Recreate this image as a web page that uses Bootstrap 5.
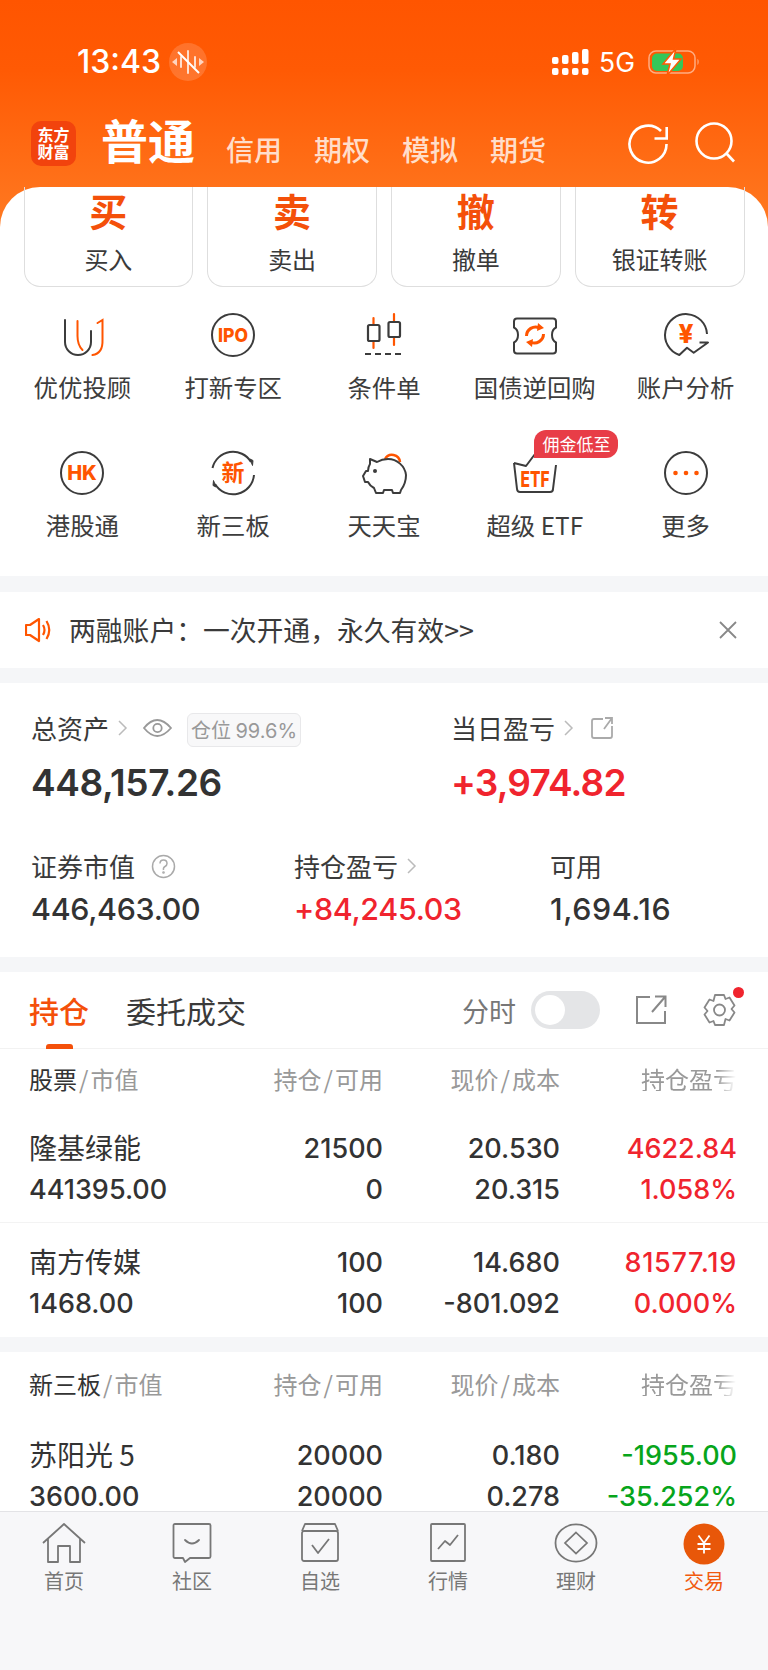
<!doctype html>
<html lang="zh-CN">
<head>
  <meta charset="utf-8">
  <meta name="viewport" content="width=device-width, initial-scale=1">
  <title>交易</title>
  <link href="https://cdn.jsdelivr.net/npm/bootstrap@5.3.5/dist/css/bootstrap.min.css" rel="stylesheet">
  <style>
    html, body { height: 100%; }
    body {
      width: 768px;
      height: 1670px;
      overflow: hidden;
      font-family: Inter, "Noto Sans CJK SC", sans-serif;
      color: #333;
      background: #fff;
    }
    svg { display: block; }
    .cjk-text { font-family: "Noto Sans CJK SC", sans-serif; }
    .wide-ones { letter-spacing: .7px; }

    /* orange header */
    .top-band {
      height: 230px;
      background: linear-gradient(#ff5500 0, #ff5a04 70px, #ff7a22 230px);
    }
    .status-bar { height: 124px; padding: 0 68px 0 77px; color: #fff; }
    .clock-text { font-size: 32px; font-weight: 500; line-height: 1; }
    .mute-blob { width: 38px; height: 38px; border-radius: 50%; background: rgba(255,255,255,.16); margin-left: 8px; }
    .net-text { font-size: 26.5px; line-height: 1; margin: 0 13px 0 10px; }
    .nav-strip { height: 39px; padding: 0 30px 0 31px; color: #fff; }
    .brand-logo {
      width: 45px; height: 45px; border-radius: 10px; background: #f2430d;
      font-size: 16px; line-height: 17px; font-weight: 700; text-align: center;
      margin-right: 25px; padding-top: 5px; flex: none;
    }
    .acct-main { font-size: 47px; font-weight: 700; line-height: 1; margin-right: 31px; margin-top: -10px; }
    .acct-other { width: 88px; font-size: 28px; font-weight: 500; line-height: 1; color: rgba(255,255,255,.78); margin-top: 11px; }
    .search-gap { margin-left: 23px; margin-right: -1px; }

    /* white sheet */
    .main-sheet { margin-top: -43px; height: 1324px; background: #fff; border-radius: 40px 40px 0 0; }
    .trade-row { padding: 0 23.5px; gap: 14px; }
    .trade-btn {
      flex: 1 1 0; height: 100px; padding: 0 0 2px; color: #333;
      border: 1px solid #dedede; border-top: 0; border-radius: 0 0 16px 16px;
    }
    .trade-glyph { font-size: 38px; line-height: 46px; font-weight: 700; color: #f4500a; }
    .trade-name { font-size: 24px; line-height: 52px; color: #3a3a3a; }

    .menu-grid { display: grid; grid-template-columns: repeat(5, 150.8px); row-gap: 45px; padding: 24px 0 34px 7px; }
    .menu-label { font-size: 24.4px; line-height: 34px; margin-top: 11px; color: #3d3d3d; white-space: nowrap; }
    .commission-tag {
      top: -19px; left: 75px; width: 84px; height: 28px; background: #e83d47; color: #fff;
      font-size: 17px; line-height: 28px; border-radius: 12px 12px 12px 0; text-align: center;
    }

    .sep-band { height: 15px; background: #f5f6f8; }
    .sep-wide { height: 16px; }

    .notice-bar { height: 76px; padding: 0 31px 0 25px; }
    .notice-text { font-size: 26.8px; margin-left: 17px; color: #3a3a3a; line-height: 1; }

    /* assets */
    .asset-panel { height: 274px; padding: 27px 0 0 31px; }
    .asset-label { height: 36px; font-size: 26px; line-height: 36px; color: #3a3a3a; }
    .asset-big { font-size: 37px; line-height: 50px; font-weight: 600; margin-top: 12px; letter-spacing: -.4px; }
    .asset-big.tone-up { letter-spacing: -.8px; }
    .asset-mid { font-size: 30.4px; line-height: 42px; font-weight: 500; margin-top: 4px; letter-spacing: -.3px; }
    .asset-mid.wide-ones { letter-spacing: .6px; }
    .span-wide { width: 420px; }
    .span-first { width: 263px; }
    .span-second { width: 256px; }
    .asset-second { margin-top: 40px; }
    .eye-gap { margin-left: 14px; }
    .pos-tag {
      height: 34px; width: 114px; margin: 4px 0 0 15px; border: 1px solid #e8e8ea; border-radius: 6px;
      background: #f8f8f9; color: #999; font-size: 20px; line-height: 32px; text-align: center;
    }
    .tag-num { font-family: Inter, sans-serif; }
    .tone-up { color: #f0242e; }
    .tone-down { color: #07a51b; }

    /* positions */
    .tab-strip { height: 77px; padding: 0 29px 0 29px; border-bottom: 1px solid #f2f2f2; }
    .tab-on { font-size: 30px; color: #f4500a; line-height: 1; font-weight: 500; }
    .tab-off { font-size: 30px; margin-left: 37px; line-height: 1; color: #3a3a3a; }
    .tab-mark { left: 46px; bottom: -1px; width: 27px; height: 5px; background: #f4500a; border-radius: 3px 3px 0 0; }
    .split-text { font-size: 27px; color: #777; line-height: 1; margin-right: 15px; }
    .mini-switch { width: 69px; height: 38px; border-radius: 19px; background: #e4e5e7; padding: 4px; margin-right: 35px; }
    .mini-knob { width: 30px; height: 30px; border-radius: 50%; background: #fff; }
    .gear-wrap { margin-left: 35px; margin-right: 2px; }
    .red-dot { right: -7px; top: -6px; width: 11px; height: 11px; border-radius: 50%; background: #f0242e; }

    .pos-grid { display: grid; grid-template-columns: 1fr 177px 177px 177px; padding: 0 31px 0 29px; }
    .pos-head { height: 60px; align-items: center; font-size: 24px; color: #999; line-height: 1; }
    .pos-head-tall { height: 64px; }
    .pos-head b { font-weight: 400; color: #333; }
    .head-slash { margin: 0 2px; }
    .fade-end { -webkit-mask-image: linear-gradient(to right, #000 78%, transparent 99%); mask-image: linear-gradient(to right, #000 78%, transparent 99%); }
    .pos-item { height: 114px; padding-top: 19px; font-size: 27px; line-height: 41px; font-weight: 500; }
    .pos-item .pos-name { font-size: 28px; font-weight: 400; line-height: 39px; }
    .pos-line { border-bottom: 1px solid #f3f3f3; }

    /* bottom tabs */
    .foot-bar { height: 159px; background: #f7f7f9; border-top: 1px solid #e3e3e6; }
    .foot-item { width: 128px; padding-top: 11px; color: #777; }
    .foot-label { font-size: 20px; line-height: 26px; margin-top: 5px; }
    .foot-tight { margin-top: 3px; }
    .foot-active { color: #f15a0f; }
  </style>
</head>

<body>
  <div class="top-band">
    <div class="status-bar d-flex align-items-center">
      <span class="clock-text">13:43</span>
      <span class="mute-blob d-flex align-items-center justify-content-center">
        <svg width="38" height="38" viewBox="0 0 38 38" fill="#fff">
          <path d="M3 19l5-4v8zM35 19l-5-4v8z" opacity=".7"/>
          <path d="M12 14v10M19 8v22M26 14v10" stroke="#fff" stroke-opacity=".85" stroke-width="1.800" stroke-linecap="round"/>
          <path d="M9 9l21 21" stroke="#fff" stroke-width="2"/>
        </svg>
      </span>
      <span class="ms-auto">
        <svg width="37" height="26" viewBox="0 0 37 26" fill="#fff">
          <rect x="0" y="19" width="6.5" height="7" rx="2"/><rect x="10" y="19" width="6.5" height="7" rx="2"/>
          <rect x="20" y="19" width="6.5" height="7" rx="2"/><rect x="30" y="19" width="6.5" height="7" rx="2"/>
          <rect x="0" y="8" width="6.5" height="7" rx="2"/><rect x="10" y="6" width="6.5" height="9" rx="2"/>
          <rect x="20" y="3" width="6.5" height="12" rx="2"/><rect x="30" y="0" width="6.5" height="15" rx="2"/>
        </svg>
      </span>
      <span class="net-text">5G</span>
      <svg width="52" height="28" viewBox="0 0 52 28">
        <rect x="1" y="3" width="46" height="22" rx="7" fill="none" stroke="#fff" stroke-opacity=".5" stroke-width="1.5"/>
        <rect x="4" y="5.5" width="31" height="17.500" rx="5" fill="#34c759"/>
        <path d="M49.500 11c1.500.5 1.500 5 0 6z" fill="#fff" fill-opacity=".55"/>
        <path d="M28 0.500L15 16h7l-3 11.500L33 11h-7.500z" fill="#fff" stroke="#ff5a04" stroke-width="1.500"/>
      </svg>
    </div>
    <div class="nav-strip d-flex align-items-center">
      <div class="brand-logo cjk-text">东方<br>财富</div>
      <div class="acct-main cjk-text">普通</div>
      <div class="acct-other cjk-text">信用</div>
      <div class="acct-other cjk-text">期权</div>
      <div class="acct-other cjk-text">模拟</div>
      <div class="acct-other cjk-text">期货</div>
      <svg class="ms-auto flex-shrink-0" width="44" height="44" viewBox="0 0 44 44" fill="none" stroke="#fff" stroke-width="2.600">
        <path d="M35 9A18.500 18.500 0 1 0 40.500 22"/>
        <path d="M40.700 5v11.500H28.500"/>
      </svg>
      <svg class="search-gap flex-shrink-0" width="46" height="46" viewBox="0 0 46 46" fill="none" stroke="#fff" stroke-width="2.600">
        <circle cx="21" cy="20" r="17.500"/><path d="M33.500 32.500L41 40.500"/>
      </svg>
    </div>
  </div>

  <div class="main-sheet">
    <div class="trade-row d-flex">
      <a class="btn trade-btn cjk-text"><div class="trade-glyph">买</div><div class="trade-name">买入</div></a>
      <a class="btn trade-btn cjk-text"><div class="trade-glyph">卖</div><div class="trade-name">卖出</div></a>
      <a class="btn trade-btn cjk-text"><div class="trade-glyph">撤</div><div class="trade-name">撤单</div></a>
      <a class="btn trade-btn cjk-text"><div class="trade-glyph">转</div><div class="trade-name">银证转账</div></a>
    </div>

    <div class="menu-grid text-center">
      <div>
        <svg class="mx-auto" width="48" height="48" viewBox="0 0 48 48" fill="none" stroke-width="2" stroke-linecap="round">
          <path d="M7 9v22a13 13 0 0 0 26 0V20" stroke="#3c3c3c"/>
          <path d="M19.500 10v15q0 9 5 14" stroke="#ff5500"/>
          <path d="M34.500 44q10.500-1.500 10-15V9l-5 3" stroke="#ff5500"/>
        </svg>
        <div class="menu-label cjk-text">优优投顾</div>
      </div>
      <div>
        <svg class="mx-auto" width="48" height="48" viewBox="0 0 48 48" fill="none">
          <circle cx="24" cy="24" r="21" stroke="#3c3c3c" stroke-width="2"/>
          <text x="24" y="31" text-anchor="middle" font-family="Inter" font-weight="800" font-size="19" fill="#ff5500" textLength="30" lengthAdjust="spacingAndGlyphs">IPO</text>
        </svg>
        <div class="menu-label cjk-text">打新专区</div>
      </div>
      <div>
        <svg class="mx-auto" width="48" height="48" viewBox="0 0 48 48" fill="none" stroke-width="2.200">
          <path d="M13.500 7v7M13.500 30v7M34 3v8M34 26v8" stroke="#ff5500" stroke-linecap="round"/>
          <rect x="8" y="14" width="11.500" height="16" rx="1.500" stroke="#3c3c3c"/>
          <rect x="28.500" y="11" width="11.500" height="15" rx="1.500" stroke="#3c3c3c"/>
          <path d="M5 43h38" stroke="#3c3c3c" stroke-dasharray="6 4"/>
        </svg>
        <div class="menu-label cjk-text">条件单</div>
      </div>
      <div>
        <svg class="mx-auto" width="48" height="48" viewBox="0 0 48 48" fill="none">
          <path d="M6 7.500h36q3 0 3 3v6q-4 2-4 7.500t4 7.500v8q0 3-3 3H6q-3 0-3-3v-8q4-2 4-7.500t-4-7.500v-6q0-3 3-3z" stroke="#3c3c3c" stroke-width="2"/>
          <path d="M15.500 25a9 9 0 0 1 13-8M32.500 23a9 9 0 0 1-13 8" stroke="#ff5500" stroke-width="3"/>
          <path d="M27 12l6 5-7 3zM21 36l-6-5 7-3z" fill="#ff5500"/>
        </svg>
        <div class="menu-label cjk-text">国债逆回购</div>
      </div>
      <div>
        <svg class="mx-auto" width="48" height="48" viewBox="0 0 48 48" fill="none">
          <path d="M45 23A21 21 0 1 0 17.300 44L25 36.700l6.700 5L46 31.500h-8.500" stroke="#3c3c3c" stroke-width="2" stroke-linejoin="round"/>
          <text x="24" y="32" text-anchor="middle" font-family="Inter" font-weight="800" font-size="26" fill="#ff5500">¥</text>
        </svg>
        <div class="menu-label cjk-text">账户分析</div>
      </div>
      <div>
        <svg class="mx-auto" width="48" height="48" viewBox="0 0 48 48" fill="none">
          <circle cx="24" cy="24" r="21" stroke="#3c3c3c" stroke-width="2"/>
          <text x="24" y="31" text-anchor="middle" font-family="Inter" font-weight="800" font-size="20" fill="#ff5500">HK</text>
        </svg>
        <div class="menu-label cjk-text">港股通</div>
      </div>
      <div>
        <svg class="mx-auto" width="48" height="48" viewBox="0 0 48 48" fill="none">
          <path d="M3.500 19A21 21 0 0 1 42 13M45 26A21 21 0 0 1 6 35" stroke="#3c3c3c" stroke-width="2"/>
          <path d="M41 10l3 1.500-.5 5zM7 38l-3-1.500.5-5z" fill="#3c3c3c" stroke="#3c3c3c"/>
          <text x="24" y="32" text-anchor="middle" font-family="Noto Sans CJK SC" font-weight="700" font-size="23" fill="#ff5500">新</text>
        </svg>
        <div class="menu-label cjk-text">新三板</div>
      </div>
      <div>
        <svg class="mx-auto" width="48" height="48" viewBox="0 0 48 48" fill="none" stroke-width="2" stroke-linejoin="round">
          <path d="M25 10a8 8 0 0 1 15 3" stroke="#ff5500" stroke-width="2.500"/>
          <path d="M10 10l7 3q5-3 11-3c9 0 17 7 18 16 0 6-2 11-5 15l-1 3h-7l-1-3h-8l-1 3h-7l-2-5q-4-2-6-6H5l-2-6 3-5h2q0-4 2-7z" stroke="#3c3c3c"/>
          <circle cx="15" cy="22" r="2" fill="#3c3c3c"/>
        </svg>
        <div class="menu-label cjk-text">天天宝</div>
      </div>
      <div class="position-relative">
        <svg class="mx-auto" width="48" height="48" viewBox="0 0 48 48" fill="none">
          <path d="M3 14l3 26q.3 3 3 3h30q3 0 3-3l3-24M3 14l12 3 9-12" stroke="#3c3c3c" stroke-width="2" stroke-linejoin="round"/>
          <text x="24" y="38" text-anchor="middle" font-family="Inter" font-weight="800" font-size="21" fill="#ff5500" textLength="29" lengthAdjust="spacingAndGlyphs">ETF</text>
        </svg>
        <span class="commission-tag position-absolute cjk-text">佣金低至</span>
        <div class="menu-label cjk-text">超级 ETF</div>
      </div>
      <div>
        <svg class="mx-auto" width="48" height="48" viewBox="0 0 48 48" fill="none">
          <circle cx="24" cy="24" r="21" stroke="#3c3c3c" stroke-width="2"/>
          <circle cx="13.500" cy="24" r="2.300" fill="#ff5500"/><circle cx="24" cy="24" r="2.300" fill="#ff5500"/><circle cx="34.500" cy="24" r="2.300" fill="#ff5500"/>
        </svg>
        <div class="menu-label cjk-text">更多</div>
      </div>
    </div>

    <div class="sep-band sep-wide"></div>
    <div class="notice-bar d-flex align-items-center">
      <svg width="27" height="26" viewBox="0 0 27 26" fill="none" stroke="#ff5500" stroke-width="2.200" stroke-linejoin="round">
        <path d="M1 8v10h4l9 6V2L5 8z"/><path d="M18 8q3 5 0 10M21.500 4q5.500 9 0 18"/>
      </svg>
      <span class="notice-text cjk-text">两融账户：一次开通，永久有效&gt;&gt;</span>
      <svg class="ms-auto" width="18" height="18" viewBox="0 0 18 18" stroke="#888" stroke-width="1.800"><path d="M1 1l16 16M17 1L1 17"/></svg>
    </div>
    <div class="sep-band"></div>

    <div class="asset-panel">
      <div class="d-flex">
        <div class="span-wide">
          <div class="asset-label d-flex align-items-center">
            <span class="cjk-text">总资产</span>
            <svg class="ms-2" width="12" height="18" viewBox="0 0 12 18" fill="none" stroke="#bbb" stroke-width="1.500"><path d="M2 2l7 7-7 7"/></svg>
            <svg class="eye-gap" width="29" height="20" viewBox="0 0 29 20" fill="none" stroke="#999" stroke-width="1.800"><path d="M1 10Q14-6 28 10 14 26 1 10z"/><circle cx="14.500" cy="10" r="4.200"/></svg>
            <span class="pos-tag cjk-text">仓位 <span class="tag-num">99.6%</span></span>
          </div>
          <div class="asset-big">448,157.26</div>
        </div>
        <div>
          <div class="asset-label d-flex align-items-center">
            <span class="cjk-text">当日盈亏</span>
            <svg class="ms-2" width="12" height="18" viewBox="0 0 12 18" fill="none" stroke="#bbb" stroke-width="1.500"><path d="M2 2l7 7-7 7"/></svg>
            <svg class="ms-3" width="23" height="23" viewBox="0 0 23 23" fill="none" stroke="#aaa" stroke-width="1.800"><path d="M12 2H3q-2 0-2 2v15q0 2 2 2h16q2 0 2-2V9M21 1l-8 11M14 1h7v6"/></svg>
          </div>
          <div class="asset-big tone-up">+3,974.82</div>
        </div>
      </div>
      <div class="d-flex asset-second">
        <div class="span-first">
          <div class="asset-label d-flex align-items-center">
            <span class="cjk-text">证券市值</span>
            <svg class="ms-3" width="25" height="25" viewBox="0 0 25 25" fill="none" stroke="#aaa" stroke-width="1.500"><circle cx="12.500" cy="12.500" r="11"/><path d="M9 9.500q0-3.500 3.500-3.500t3.500 3.500q0 2-2 3t-1.500 3.500"/><circle cx="12.500" cy="18.500" r=".6"/></svg>
          </div>
          <div class="asset-mid">446,463.00</div>
        </div>
        <div class="span-second">
          <div class="asset-label d-flex align-items-center">
            <span class="cjk-text">持仓盈亏</span>
            <svg class="ms-2" width="12" height="18" viewBox="0 0 12 18" fill="none" stroke="#bbb" stroke-width="1.500"><path d="M2 2l7 7-7 7"/></svg>
          </div>
          <div class="asset-mid tone-up">+84,245.03</div>
        </div>
        <div>
          <div class="asset-label cjk-text">可用</div>
          <div class="asset-mid wide-ones">1,694.16</div>
        </div>
      </div>
    </div>
    <div class="sep-band"></div>

    <div class="tab-strip d-flex align-items-center position-relative">
      <span class="tab-on cjk-text">持仓</span>
      <span class="tab-off cjk-text">委托成交</span>
      <span class="tab-mark position-absolute"></span>
      <span class="split-text cjk-text ms-auto">分时</span>
      <div class="mini-switch"><div class="mini-knob"></div></div>
      <svg width="32" height="30" viewBox="0 0 32 30" fill="none" stroke="#888" stroke-width="2"><path d="M15 2H2v26h28V16M30 2L17 17M20 1.500h10.500V12"/></svg>
      <div class="gear-wrap position-relative">
        <svg width="35" height="34" viewBox="0 0 35 34" fill="none" stroke="#888" stroke-width="1.800" stroke-linejoin="round">
          <path d="M13 2h9l1.500 4 4-1.500 5 8-3 3.500 3 3.500-5 8-4-1.500L22 32h-9l-1.500-4-4 1.500-5-8 3-3.500-3-3.500 5-8 4 1.500z"/>
          <circle cx="17.500" cy="17" r="5.500"/>
        </svg>
        <span class="red-dot position-absolute"></span>
      </div>
    </div>

    <div class="pos-grid pos-head cjk-text">
      <div><b>股票</b><span class="head-slash">/</span>市值</div><div class="text-end">持仓<span class="head-slash">/</span>可用</div><div class="text-end">现价<span class="head-slash">/</span>成本</div><div class="text-end"><span class="fade-end d-inline-block">持仓盈亏</span></div>
    </div>
    <div class="pos-item pos-line">
      <div class="pos-grid"><div class="pos-name cjk-text">隆基绿能</div><div class="text-end">21500</div><div class="text-end">20.530</div><div class="text-end tone-up">4622.84</div></div>
      <div class="pos-grid"><div>441395.00</div><div class="text-end">0</div><div class="text-end">20.315</div><div class="text-end tone-up">1.058%</div></div>
    </div>
    <div class="pos-item">
      <div class="pos-grid"><div class="pos-name cjk-text">南方传媒</div><div class="text-end">100</div><div class="text-end">14.680</div><div class="text-end tone-up wide-ones">81577.19</div></div>
      <div class="pos-grid"><div>1468.00</div><div class="text-end">100</div><div class="text-end">-801.092</div><div class="text-end tone-up">0.000%</div></div>
    </div>
    <div class="sep-band"></div>
    <div class="pos-grid pos-head pos-head-tall cjk-text">
      <div><b>新三板</b><span class="head-slash">/</span>市值</div><div class="text-end">持仓<span class="head-slash">/</span>可用</div><div class="text-end">现价<span class="head-slash">/</span>成本</div><div class="text-end"><span class="fade-end d-inline-block">持仓盈亏</span></div>
    </div>
    <div class="pos-item">
      <div class="pos-grid"><div class="pos-name cjk-text">苏阳光 5</div><div class="text-end">20000</div><div class="text-end">0.180</div><div class="text-end tone-down">-1955.00</div></div>
      <div class="pos-grid"><div>3600.00</div><div class="text-end">20000</div><div class="text-end">0.278</div><div class="text-end tone-down">-35.252%</div></div>
    </div>
  </div>

  <div class="foot-bar position-relative d-flex text-center cjk-text">
    <div class="foot-item">
      <svg class="mx-auto" width="44" height="40" viewBox="0 0 44 40" fill="none" stroke="#777" stroke-width="1.800" stroke-linejoin="round">
        <path d="M1 20L22 1l21 19M6 16v23h10V23h12v16h10V16"/>
      </svg>
      <div class="foot-label">首页</div>
    </div>
    <div class="foot-item">
      <svg class="mx-auto" width="40" height="40" viewBox="0 0 40 40" fill="none" stroke="#777" stroke-width="1.800" stroke-linejoin="round">
        <path d="M3 1h34q1.500 0 1.500 1.500v31q0 1.500-1.500 1.500H18l-5 4-2-4H3q-1.500 0-1.500-1.500v-31Q1.500 1 3 1z"/>
        <path d="M13 17q7 7 14 0" stroke-linecap="round"/>
      </svg>
      <div class="foot-label">社区</div>
    </div>
    <div class="foot-item">
      <svg class="mx-auto" width="38" height="40" viewBox="0 0 38 40" fill="none" stroke="#777" stroke-width="1.800" stroke-linejoin="round">
        <rect x="1" y="8" width="36" height="30" rx="2"/>
        <path d="M1 8l3-7h30l3 7M11 22l6 8 11-14"/>
      </svg>
      <div class="foot-label">自选</div>
    </div>
    <div class="foot-item">
      <svg class="mx-auto" width="38" height="40" viewBox="0 0 38 40" fill="none" stroke="#777" stroke-width="1.800" stroke-linejoin="round">
        <rect x="2" y="1" width="34" height="37" rx="1"/>
        <path d="M9 26l7-8 5 4 8-10"/>
      </svg>
      <div class="foot-label">行情</div>
    </div>
    <div class="foot-item">
      <svg class="mx-auto" width="44" height="40" viewBox="0 0 44 44" fill="none" stroke="#777" stroke-width="1.800" preserveAspectRatio="none">
        <circle cx="22" cy="22" r="20.500"/><path d="M22 10.500L33 22 22 33.500 11 22z"/>
      </svg>
      <div class="foot-label">理财</div>
    </div>
    <div class="foot-item foot-active">
      <svg class="mx-auto" width="42" height="42" viewBox="0 0 42 42">
        <circle cx="21" cy="21" r="20.500" fill="#e85709"/>
        <path d="M15.500 12.500l5.500 7.500 5.500-7.500M14.500 21h13M14.500 26h13M21 20v10.500" fill="none" stroke="#fff" stroke-width="1.800"/>
      </svg>
      <div class="foot-label foot-tight">交易</div>
    </div>
  </div>

  <script src="https://cdn.jsdelivr.net/npm/bootstrap@5.3.5/dist/js/bootstrap.bundle.min.js"></script>
</body>
</html>
